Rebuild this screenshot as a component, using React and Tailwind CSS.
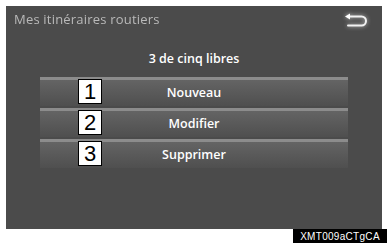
import React from "react";

const rows = [
  { n: "1", label: "Nouveau" },
  { n: "2", label: "Modifier" },
  { n: "3", label: "Supprimer" },
];

function BackIcon() {
  return (
    <svg width="28" height="18" viewBox="0 0 28 18" fill="none" className="drop-shadow-[0_0_2px_rgba(255,255,255,0.7)]">
      <path d="M7 4.5 H19.5 a4.5 4.5 0 0 1 0 9 H6" stroke="#f2f2f2" strokeWidth="2" strokeLinecap="round" />
      <path d="M3 4.5 L8 1.5 L8 7.5 Z" fill="#ffffff" />
    </svg>
  );
}

export default function App() {
  return (
    <div className="relative h-[243px] w-[387px] overflow-hidden bg-white" style={{ fontFamily: '"Open Sans", "Noto Sans", sans-serif' }}>
      <div className="ml-[6px] mt-[6px] flex h-[223px] w-[376px] flex-col bg-[#4b4b4b]">
        <div className="flex h-[26px] items-start justify-between pl-[8px] pr-[12px] pt-[6px]">
          <span className="text-[13px] leading-[15px] tracking-[0.2px] text-[#b9b9b9] blur-[0.5px]">Mes itinéraires routiers</span>
          <BackIcon />
        </div>
        <div className="mt-[19px] text-center text-[12.5px] font-semibold leading-[16px] text-white">3 de cinq libres</div>
        <div className="ml-[34px] mt-[10px] flex w-[308px] flex-col gap-[2px]">
          {rows.map((r) => (
            <div key={r.n} className="relative flex h-[29px] items-center justify-center border-t-[3px] border-[#8c8c8c] bg-linear-to-b from-[#646464] to-[#4f4f4f]">
              <span className="text-[12.5px] font-semibold leading-[16px] text-white">{r.label}</span>
              <div className="absolute left-[38px] top-[-1px] flex h-[25px] w-[24px] items-center justify-center border border-black bg-white text-[22px] leading-none text-black" style={{ fontFamily: '"Liberation Sans", Arial, sans-serif' }}>
                {r.n}
              </div>
            </div>
          ))}
        </div>
      </div>
      <div className="absolute bottom-0 right-0 flex h-[14px] w-[94px] items-center justify-center bg-black text-[10px] tracking-[0.3px] text-white" style={{ fontFamily: '"Liberation Sans", Arial, sans-serif' }}>
        XMT009aCTgCA
      </div>
    </div>
  );
}
